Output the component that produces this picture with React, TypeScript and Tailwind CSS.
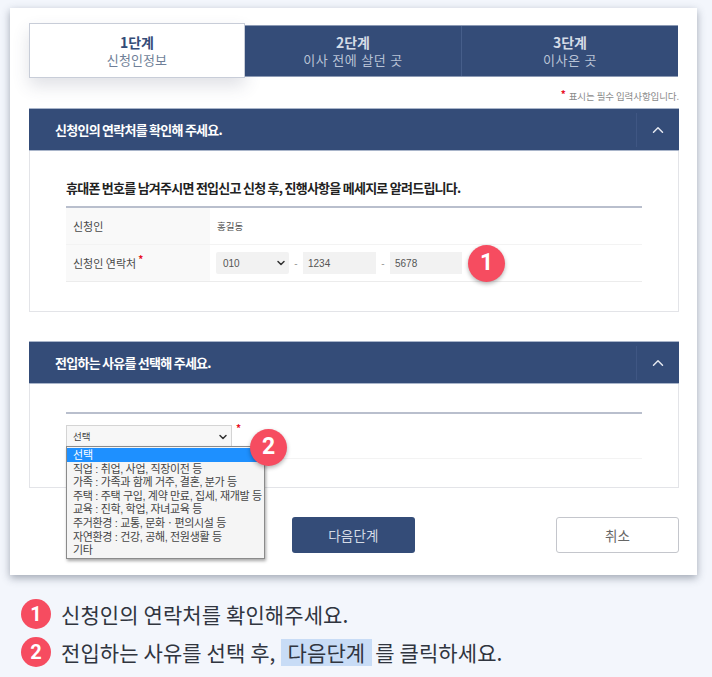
import React from "react";
import { ChevronDown, ChevronUp } from "lucide-react";

const kr = "font-['Noto_Sans_CJK_KR','Noto_Sans',sans-serif]";
const tight = "font-['Liberation_Sans','Noto_Sans_CJK_KR',sans-serif]";

const options = [
  "직업 : 취업, 사업, 직장이전 등",
  "가족 : 가족과 함께 거주, 결혼, 분가 등",
  "주택 : 주택 구입, 계약 만료, 집세, 재개발 등",
  "교육 : 진학, 학업, 자녀교육 등",
  "주거환경 : 교통, 문화ㆍ편의시설 등",
  "자연환경 : 건강, 공해, 전원생활 등",
  "기타",
];

const Badge = ({ n, className }: { n: number; className: string }) => (
  <div
    className={`absolute flex items-center justify-center rounded-full bg-[#f64c60] font-bold text-white font-['Roboto',sans-serif] ${className}`}
  >
    {n}
  </div>
);

const SectionHead = ({ title }: { title: string }) => (
  <div className="flex h-[43px] items-center justify-between border-y border-[#a9b5ca] bg-[#344c78] pl-[26px]">
    <span className="text-[13px] font-bold tracking-[-0.75px] text-white">{title}</span>
    <div className="flex h-[34px] w-[43px] items-center justify-center border-l border-[#3f5683]">
      <ChevronUp size={18} strokeWidth={2} className="text-[#e4e8f0]" />
    </div>
  </div>
);

const Step = ({ step, label }: { step: string; label: string }) => (
  <div className="flex h-full flex-1 flex-col items-center justify-center border-l border-[#465e8a] first:border-l-0">
    <span className="text-[14px] font-bold leading-[18px] text-[#d5dbe6]">{step}</span>
    <span className={`mt-px text-[13px] leading-[17px] tracking-[0.5px] text-[#b9c3d6] ${tight}`}>{label}</span>
  </div>
);

export default function App() {
  return (
    <div className={`h-[677px] w-[712px] overflow-hidden bg-[#f3f6fc] pt-2 pl-2.5 ${kr}`}>
      <div className="h-[567px] w-[687px] bg-white pl-[19px] pr-[18px] pt-[15px] shadow-[0_3px_8px_rgba(60,70,90,0.45)]">
        {/* steps */}
        <div className="flex h-[55px] items-center">
          <div className="flex h-[55px] w-[216px] flex-col items-center justify-center border border-[#c8cdd8] bg-white shadow-[0_8px_16px_rgba(60,70,100,0.16)]">
            <span className="text-[14px] font-bold leading-[18px] text-[#344c78]">1단계</span>
            <span className={`mt-px text-[13px] leading-[17px] tracking-[0.1px] text-[#6f7f98] ${tight}`}>신청인정보</span>
          </div>
          <div className="flex h-[52px] w-[433px] border-y border-[#8c9ab4] bg-[#344c78]">
            <Step step="2단계" label="이사 전에 살던 곳" />
            <Step step="3단계" label="이사온 곳" />
          </div>
        </div>

        <p className="mt-[9px] mb-[3px] flex h-[18px] items-center justify-end text-[9.5px] tracking-[-0.1px] text-[#8a8a8a]">
          <span className="mr-[3px] -mt-[5px] text-[10px] font-bold text-[#e8101f]">*</span>
          표시는 필수 입력사항입니다.
        </p>

        {/* section 1 */}
        <section className="h-[204px] border-x border-b border-[#e3e4e8]">
          <div className="-mx-px">
            <SectionHead title="신청인의 연락처를 확인해 주세요." />
          </div>
          <div className="px-[36px] pt-[27px]">
            <h2 className="pb-[8px] text-[13px] font-bold leading-[20px] tracking-[-0.75px] text-[#222]">
              휴대폰 번호를 남겨주시면 전입신고 신청 후, 진행사항을 메세지로 알려드립니다.
            </h2>
            <div className="border-t-2 border-[#b9bfcd] text-[11px] text-[#4a4a4a]">
              <div className="flex h-[37px] items-center border-b border-[#f3f3f3]">
                <div className="flex h-full w-[144px] items-center bg-[#f9f9f9] pl-[7px]">신청인</div>
                <div className="pl-[7px] text-[9.5px]">홍길동</div>
              </div>
              <div className="flex h-[37px] items-center border-b border-[#ececec]">
                <div className="flex h-full w-[144px] items-center bg-[#f9f9f9] pl-[7px]">
                  신청인 연락처
                  <span className="ml-[2px] -mt-[10px] text-[10px] font-bold text-[#e8101f]">*</span>
                </div>
                <div className="flex items-center pl-[6px] font-['Liberation_Sans',sans-serif] text-[10px] text-[#555]">
                  <div className="flex h-[22px] w-[73px] items-center justify-between rounded-[2px] bg-[#f2f2f2] pl-[7px] pr-[2px]">
                    010
                    <ChevronDown size={12} strokeWidth={3} className="text-[#333]" />
                  </div>
                  <span className="w-[14px] text-center text-[#999]">-</span>
                  <div className="flex h-[22px] w-[73px] items-center bg-[#f2f2f2] pl-[5px]">1234</div>
                  <span className="w-[14px] text-center text-[#999]">-</span>
                  <div className="flex h-[22px] w-[72px] items-center bg-[#f2f2f2] pl-[5px]">5678</div>
                </div>
              </div>
            </div>
          </div>
        </section>

        {/* section 2 */}
        <section className="mt-[29px] h-[147px] border-x border-b border-[#e3e4e8]">
          <div className="-mx-px">
            <SectionHead title="전입하는 사유를 선택해 주세요." />
          </div>
          <div className="px-[36px] pt-[28px]">
            <div className="border-t-2 border-[#b9bfcd]">
              <div className="flex h-[45px] items-start border-b border-[#f3f3f3] pt-[11px]">
                <div className="flex h-[23px] w-[166px] items-center justify-between border border-[#d4d4d4] bg-[#f7f7f7] pl-[6px] pr-[2px] text-[9.5px] text-[#444]">
                  선택
                  <ChevronDown size={12} strokeWidth={3} className="text-[#333]" />
                </div>
                <span className="ml-[4px] -mt-[2px] text-[10px] font-bold leading-[10px] text-[#e8101f]">*</span>
              </div>
            </div>
          </div>
        </section>

        {/* buttons */}
        <div className="mt-[29px] flex justify-end">
          <button className="mr-[141px] h-[36px] w-[123px] rounded-[3px] bg-[#344c78] text-[13.5px] tracking-[0.2px] text-[#d5dbe6]">
            다음단계
          </button>
          <button className="h-[36px] w-[123px] rounded-[3px] border border-[#c4c6cc] bg-white text-[13.5px] tracking-[0.2px] text-[#666]">
            취소
          </button>
        </div>
      </div>

      {/* legend */}
      <div className="mt-[24px] flex flex-col gap-[8px] pl-[11px] text-[21px] leading-[30px] tracking-[0.1px] text-[#30353f]">
        <div className="flex items-center gap-[10px]">
          <span className="flex h-[30px] w-[30px] items-center justify-center rounded-full bg-[#f64c60] font-['Roboto',sans-serif] text-[20px] font-bold text-white">1</span>
          신청인의 연락처를 확인해주세요.
        </div>
        <div className="flex items-center gap-[10px]">
          <span className="flex h-[30px] w-[30px] items-center justify-center rounded-full bg-[#f64c60] font-['Roboto',sans-serif] text-[20px] font-bold text-white">2</span>
          <span className="whitespace-nowrap">
            전입하는 사유를 선택 후,
            <span className="ml-[5px] mr-[3px] inline-block h-[27px] bg-[#c8dcf6] px-[7px] leading-[27px]">다음단계</span>
            를 클릭하세요.
          </span>
        </div>
      </div>

      {/* open select list */}
      <div className={`absolute left-[66px] top-[446px] w-[199px] border border-[#8b8b8b] bg-[#f5f5f5] py-px text-[11px] leading-[12.6px] text-[#444] shadow-[1px_2px_3px_rgba(0,0,0,0.35)] ${tight}`}>
        <div className="bg-[#1e90ff] pl-[6px] pt-px text-white">선택</div>
        {options.map((o) => (
          <div key={o} className="whitespace-nowrap pl-[6px] pt-px tracking-[-0.35px]">
            {o}
          </div>
        ))}
      </div>

      <Badge n={1} className="left-[468px] top-[245px] h-[37px] w-[37px] text-[23px] shadow-[0_2px_4px_rgba(0,0,0,0.3)]" />
      <Badge n={2} className="left-[250px] top-[429px] h-[37px] w-[37px] text-[23px] shadow-[0_2px_4px_rgba(0,0,0,0.3)]" />
    </div>
  );
}
